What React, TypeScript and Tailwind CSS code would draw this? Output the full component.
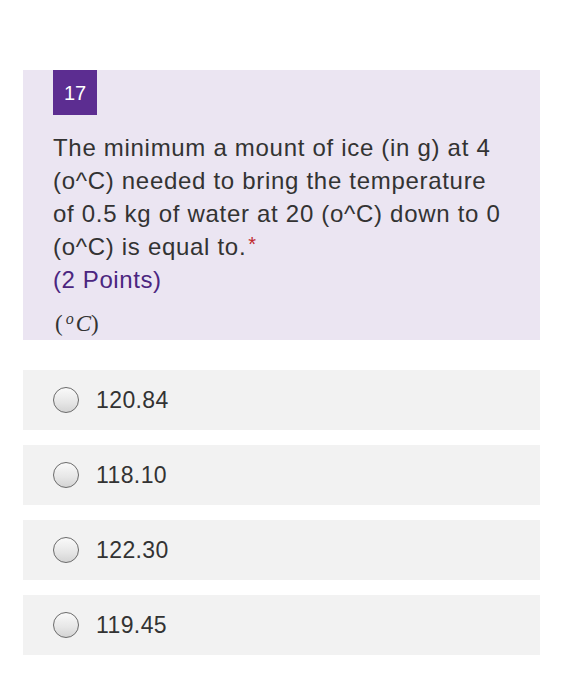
import React from "react";

const options = ["120.84", "118.10", "122.30", "119.45"];

function Radio() {
  return (
    <span className="block w-[26px] h-[26px] rounded-full border-[1.5px] border-[#6b6b6b] bg-[linear-gradient(180deg,#fafafa_0%,#e6e6e6_60%,#d4d4d4_100%)] shrink-0" />
  );
}

export default function App() {
  return (
    <div className="w-[564px] h-[700px] bg-white pt-[70px] text-[#333333]" style={{ fontFamily: '"Liberation Sans", Arial, sans-serif' }}>
      <div className="mx-[23px] w-[517px] bg-[#ebe5f2] pl-[30px] pr-[10px]">
        <div className="w-[44px] h-[45px] bg-[#5c2d91] text-white text-[20px] flex items-center justify-center">17</div>
        <div className="pt-[16px] text-[24px] leading-[33px] tracking-[0.7px] whitespace-nowrap">
          The minimum a mount of ice (in g) at 4<br />
          (o^C) needed to bring the temperature<br />
          of 0.5 kg of water at 20 (o^C) down to 0<br />
          (o^C) is equal to.
          <span className="relative top-[-4px] text-[#c0282d] text-[20px] leading-none ml-[2px]">*</span>
        </div>
        <div className="text-[24px] leading-[33px] tracking-[0.6px] text-[#4b2680]">(2 Points)</div>
        <div className="mt-[16px] h-[28px] pl-[2px] text-[23px] leading-[24px] text-[#333]" style={{ fontFamily: '"Liberation Serif", "Times New Roman", serif' }}>
          (<sup className="italic text-[16px] leading-none top-[-0.45em] ml-[3px] mr-[2px]">o</sup><span className="italic">C</span>)
        </div>
      </div>
      <div className="mx-[23px] w-[517px] mt-[30px] flex flex-col gap-[15px]">
        {options.map((o) => (
          <div key={o} className="h-[60px] bg-[#f2f2f2] flex items-center pl-[30px] gap-[17px]">
            <Radio />
            <span className="text-[23px] tracking-[0.4px]">{o}</span>
          </div>
        ))}
      </div>
    </div>
  );
}
